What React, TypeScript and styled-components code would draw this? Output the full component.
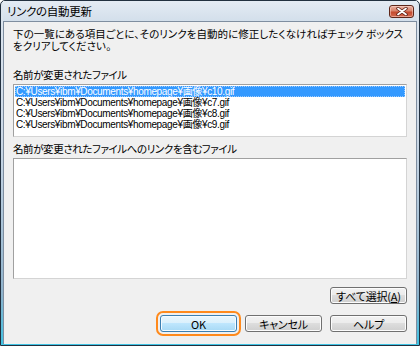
import * as React from 'react';
import styled, { createGlobalStyle } from 'styled-components';

const GlobalStyle = createGlobalStyle`
  html, body {
    margin: 0;
    padding: 0;
    background: #ffffff;
  }
  body {
    font-family: "Noto Sans CJK JP", "Liberation Sans", sans-serif;
  }
`;

const Window = styled.div`
  width: 420px;
  height: 346px;
  box-sizing: border-box;
  border: 1px solid #22303f;
  border-radius: 5px 5px 0 0;
  background: linear-gradient(#dde6ef 0%, #cbd8e6 40%, #8fb3cc 85%, #3fc3e4 100%);
  padding: 0 2px 1px 2px;
  display: flex;
  flex-direction: column;
`;

const TitleBar = styled.div`
  height: 20px;
  display: flex;
  align-items: center;
  justify-content: space-between;
  padding: 0 3px 0 4px;
  background: linear-gradient(#e4ebf3, #d3dfeb);
`;

const Title = styled.span`
  font-size: 11.5px;
  color: #000;
  font-feature-settings: "palt";
  letter-spacing: -0.3px;
`;

const CloseButton = styled.div`
  width: 25px;
  height: 13px;
  box-sizing: border-box;
  border: 1px solid #5e2619;
  border-radius: 3px;
  background: linear-gradient(#eab1a3 0%, #d8826a 45%, #c34a2f 55%, #d4694f 100%);
  box-shadow: inset 0 0 0 1px rgba(255, 220, 210, 0.5);
  display: flex;
  align-items: center;
  justify-content: center;
  margin-top: 1px;
`;

const Body = styled.div`
  flex: 1;
  background: #f0f0f0;
  border: 1px solid #7f8ea0;
  border-bottom: none;
  padding: 6px 9px 0 9px;
  display: flex;
  flex-direction: column;
`;

const Description = styled.p`
  margin: 0;
  font-size: 10.5px;
  line-height: 12px;
  color: #000;
  font-feature-settings: "palt";
  letter-spacing: 0.05px;
  white-space: nowrap;
`;

const Label = styled.div<{ $gap: number }>`
  margin-top: ${(p) => p.$gap}px;
  font-size: 10.5px;
  line-height: 11px;
  color: #000;
  font-feature-settings: "palt";
  letter-spacing: -0.4px;
`;

const ListBox = styled.div<{ $height: number }>`
  margin-top: 4px;
  height: ${(p) => p.$height}px;
  box-sizing: border-box;
  border: 1px solid #828790;
  border-color: #a0a0a0 #d4d4d4 #d4d4d4 #a0a0a0;
  background: #fff;
  padding: 1px;
`;

const Row = styled.div<{ $selected?: boolean }>`
  height: 11px;
  line-height: 11px;
  padding-left: 1px;
  font-family: "Liberation Sans", "Noto Sans CJK JP", sans-serif;
  font-size: 10px;
  letter-spacing: -0.35px;
  color: ${(p) => (p.$selected ? '#fff' : '#000')};
  background: ${(p) => (p.$selected ? '#3399ff' : 'transparent')};
  outline: ${(p) => (p.$selected ? '1px dotted #9ccbff' : 'none')};
  outline-offset: -1px;
  white-space: nowrap;
`;

const SelectAllRow = styled.div`
  margin-top: 8px;
  display: flex;
  justify-content: flex-end;
`;

const ButtonRow = styled.div`
  margin-top: 11px;
  display: flex;
  justify-content: flex-end;
  gap: 8px;
`;

const Button = styled.button<{ $default?: boolean }>`
  width: 77px;
  height: 17px;
  box-sizing: border-box;
  padding: 0;
  font-family: "Noto Sans CJK JP", "Liberation Sans", sans-serif;
  font-size: 11px;
  line-height: 14px;
  color: #000;
  font-feature-settings: "palt";
  letter-spacing: -0.2px;
  border: 1px solid ${(p) => (p.$default ? '#3c7fb1' : '#707070')};
  border-radius: 3px;
  background: ${(p) =>
    p.$default
      ? 'linear-gradient(#eaf6fd 0%, #d9f0fc 50%, #bee6fd 50%, #a7d9f5 100%)'
      : 'linear-gradient(#f2f2f2 0%, #ebebeb 50%, #dddddd 50%, #cfcfcf 100%)'};
  box-shadow: inset 0 0 0 1px ${(p) => (p.$default ? '#f4fbff' : '#fcfcfc')};
  outline: ${(p) => (p.$default ? '2px solid #ff8a1c' : 'none')};
  outline-offset: 2px;

  u {
    text-decoration: underline;
    text-underline-offset: 1px;
  }
`;

const files = [
  'C:¥Users¥ibm¥Documents¥homepage¥画像¥c10.gif',
  'C:¥Users¥ibm¥Documents¥homepage¥画像¥c7.gif',
  'C:¥Users¥ibm¥Documents¥homepage¥画像¥c8.gif',
  'C:¥Users¥ibm¥Documents¥homepage¥画像¥c9.gif',
];

const App: React.FC = (): React.ReactElement => {
  return (
    <>
      <GlobalStyle />
      <Window>
        <TitleBar>
          <Title>リンクの自動更新</Title>
          <CloseButton>
            <svg width="12" height="9" viewBox="0 0 12 9">
              <path d="M2 1.5 L10 7.5 M10 1.5 L2 7.5" stroke="#5a1c12" strokeWidth="3.4" strokeLinecap="round" />
              <path d="M2 1.5 L10 7.5 M10 1.5 L2 7.5" stroke="#ffffff" strokeWidth="1.8" strokeLinecap="round" />
            </svg>
          </CloseButton>
        </TitleBar>
        <Body>
          <Description>
            下の一覧にある項目ごとに、そのリンクを自動的に修正したくなければチェック ボックス
            <br />
            をクリアしてください。
          </Description>
          <Label $gap={17}>名前が変更されたファイル</Label>
          <ListBox $height={53}>
            {files.map((f, i) => (
              <Row key={f} $selected={i === 0}>{f}</Row>
            ))}
          </ListBox>
          <Label $gap={6}>名前が変更されたファイルへのリンクを含むファイル</Label>
          <ListBox $height={121} />
          <SelectAllRow>
            <Button>すべて選択(<u>A</u>)</Button>
          </SelectAllRow>
          <ButtonRow>
            <Button $default>OK</Button>
            <Button>キャンセル</Button>
            <Button>ヘルプ</Button>
          </ButtonRow>
        </Body>
      </Window>
    </>
  );
};

export default App;
